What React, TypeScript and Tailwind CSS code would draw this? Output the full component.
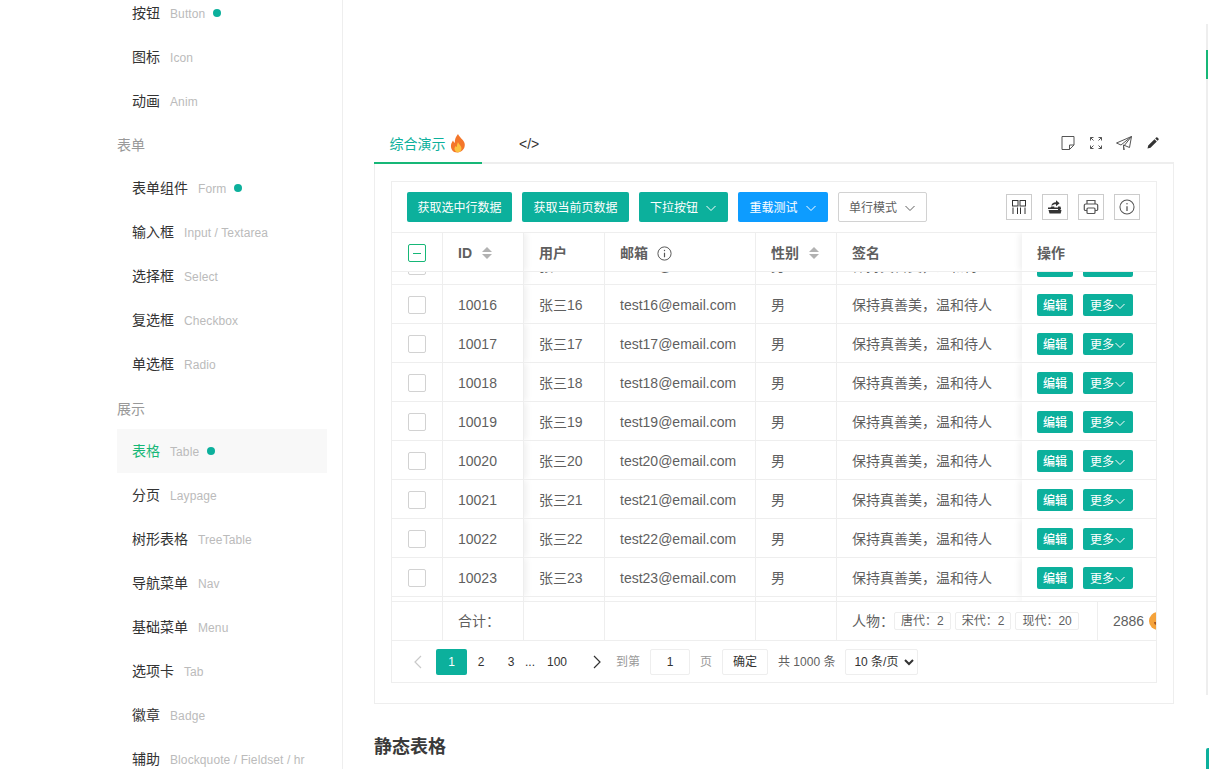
import React from "react";

const font = "font-['Liberation_Sans','Noto_Sans_CJK_SC',sans-serif]";

const Chevron = ({ className = "" }: { className?: string }) => (
  <svg viewBox="0 0 12 12" className={`w-3 h-3 ${className}`} fill="none" stroke="currentColor" strokeWidth="1">
    <path d="M1.5 4l4.5 4.5L10.5 4" />
  </svg>
);

const Sort = () => (
  <span className="ml-[10px] flex flex-col gap-[2px]">
    <span className="w-0 h-0 border-x-[5px] border-x-transparent border-b-[5px] border-b-[#b2b2b2]" />
    <span className="w-0 h-0 border-x-[5px] border-x-transparent border-t-[5px] border-t-[#b2b2b2]" />
  </span>
);

const InfoIcon = ({ size = 15 }: { size?: number }) => (
  <svg width={size} height={size} viewBox="0 0 20 20" fill="none" stroke="#555" strokeWidth="1.3">
    <circle cx="10" cy="10" r="8.8" />
    <circle cx="10" cy="6" r="0.9" fill="#555" stroke="none" />
    <path d="M10 9v6" strokeWidth="1.6" />
  </svg>
);

const Fire = () => (
  <svg width="18" height="19" viewBox="0 0 18 19" className="ml-[3px]">
    <path d="M9 0c1 3 5 5 6.5 9 1.2 4-1.500 9-6.500 9.500C4 19 1.500 15 2 11c.3-2 1.500-3.500 2-4.500.5 1 1 2 1.800 2.300C5.500 5.500 7 2.500 9 0z" fill="#f4762a" />
    <path d="M9 8c.5 2 3.500 3.500 3.500 6.500 0 2.300-1.700 3.800-3.500 3.800s-3.500-1.500-3.500-3.500c0-1.300.7-2 1.300-2.800.3.600.6 1 1 1.100C8 11 8.300 9.500 9 8z" fill="#fbc23f" />
  </svg>
);

const ToolIcon = ({ children }: { children: React.ReactNode }) => (
  <span className="w-[26px] h-[26px] border border-[#ccc] flex items-center justify-center">{children}</span>
);

type MenuItem = { cn: string; en: string; dot?: boolean; active?: boolean };

const MenuRow = ({ cn, en, dot, active }: MenuItem) => (
  <div className={`h-11 flex items-center pl-[15px] ${active ? "bg-[#f8f8f8]" : ""}`}>
    <span className={`text-sm ${active ? "text-[#16b777]" : "text-[#333]"}`}>{cn}</span>
    <span className="ml-[10px] pt-[2px] text-xs tracking-[0.1px] text-[#bbb]">{en}</span>
    {dot && <span className="ml-2 w-2 h-2 rounded-full bg-[#0cb09c]" />}
  </div>
);

const Sidebar = () => (
  <aside className="w-[343px] h-[778px] shrink-0 border-r border-[#eee] pl-[117px] pr-[15px] -mt-[9px]">
    <MenuRow cn="按钮" en="Button" dot />
    <MenuRow cn="图标" en="Icon" />
    <MenuRow cn="动画" en="Anim" />
    <div className="h-[43px] flex items-center text-sm text-[#999]">表单</div>
    <MenuRow cn="表单组件" en="Form" dot />
    <MenuRow cn="输入框" en="Input / Textarea" />
    <MenuRow cn="选择框" en="Select" />
    <MenuRow cn="复选框" en="Checkbox" />
    <MenuRow cn="单选框" en="Radio" />
    <div className="h-[43px] pt-[2px] flex items-center text-sm text-[#999]">展示</div>
    <MenuRow cn="表格" en="Table" dot active />
    <MenuRow cn="分页" en="Laypage" />
    <MenuRow cn="树形表格" en="TreeTable" />
    <MenuRow cn="导航菜单" en="Nav" />
    <MenuRow cn="基础菜单" en="Menu" />
    <MenuRow cn="选项卡" en="Tab" />
    <MenuRow cn="徽章" en="Badge" />
    <MenuRow cn="辅助" en="Blockquote / Fieldset / hr" />
  </aside>
);

const gridCols = "grid grid-cols-[51px_81px_81px_151px_81px_185px_134px]";
const fixedRight = "bg-white shadow-[-3px_0_6px_rgba(0,0,0,0.06)] [clip-path:inset(0_0_0_-10px)] relative";
const fixedLeft = "shadow-[3px_0_6px_rgba(0,0,0,0.06)] [clip-path:inset(0_-10px_0_0)]";

const Row = ({ n }: { n: number }) => (
  <div className={`${gridCols} h-[39px] border-b border-[#eee] text-sm text-[#5f5f5f]`}>
    <div className="border-r border-[#eee] flex items-center justify-center pt-[2px] pr-[1px]">
      <span className="w-[18px] h-[18px] border border-[#d2d2d2] rounded-[2px] bg-white" />
    </div>
    <div className={`border-r border-[#eee] flex items-center pt-[2px] pl-[15px] ${fixedLeft}`}>{10000 + n}</div>
    <div className="border-r border-[#eee] flex items-center pt-[2px] pl-[15px]">张三{n}</div>
    <div className="border-r border-[#eee] flex items-center pt-[2px] pl-[15px]">test{n}@email.com</div>
    <div className="border-r border-[#eee] flex items-center pt-[2px] pl-[15px]">男</div>
    <div className="flex items-center pt-[2px] pl-[15px]">保持真善美，温和待人</div>
    <div className={`${fixedRight} flex items-center pt-[2px] pl-[15px] gap-[10px]`}>
      <span className="w-9 h-[22px] pt-[2px] rounded-[2px] bg-[#0cb09c] text-white text-xs font-medium flex items-center justify-center">编辑</span>
      <span className="w-[50px] h-[22px] pt-[2px] rounded-[2px] bg-[#0cb09c] text-white text-xs flex items-center justify-center">
        更多<Chevron />
      </span>
    </div>
  </div>
);

const Filler = () => (
  <div className={`${gridCols} h-[4px]`}>
    <div className="border-r border-[#eee]" />
    <div className={`border-r border-[#eee] ${fixedLeft}`} />
    <div className="border-r border-[#eee]" />
    <div className="border-r border-[#eee]" />
    <div className="border-r border-[#eee]" />
    <div />
    <div className={fixedRight} />
  </div>
);

const Btn = ({ children, blue, w }: { children: React.ReactNode; blue?: boolean; w: string }) => (
  <span className={`h-[30px] ${w} rounded-[2px] text-white text-xs pt-px flex items-center justify-center gap-[7px] ${blue ? "bg-[#0d9cff]" : "bg-[#0cb09c]"}`}>
    {children}
  </span>
);

const Toolbar = () => (
  <div className="h-[51px] border-b border-[#eee] pl-[15px] pr-4 flex items-center">
    <div className="flex items-center gap-[10px]">
      <Btn w="w-[105px]">获取选中行数据</Btn>
      <Btn w="w-[107px]">获取当前页数据</Btn>
      <Btn w="w-[89px]">下拉按钮<Chevron /></Btn>
      <Btn w="w-[90px]" blue>重载测试<Chevron /></Btn>
      <span className="h-[30px] w-[89px] rounded-[2px] border border-[#d2d2d2] text-[#5f5f5f] text-xs pt-px flex items-center justify-center gap-[7px]">
        单行模式<Chevron />
      </span>
    </div>
    <div className="ml-auto flex gap-[10px] text-[#333]">
      <ToolIcon>
        <svg width="16" height="16" viewBox="0 0 16 16" fill="none" stroke="#333" strokeWidth="1">
          <rect x="1.500" y="1.500" width="5.500" height="5.500" />
          <rect x="9" y="1.500" width="5.500" height="5.500" />
          <path d="M2 8.500v6.500M6.500 8.500v6.500M9.500 8.500v6.500M14 8.500v6.500" />
        </svg>
      </ToolIcon>
      <ToolIcon>
        <svg width="16" height="16" viewBox="0 0 16 16" fill="#333">
          <path d="M1 8.500h2.500l.800-1h3v1H14v1.500H1z" />
          <path d="M1.500 11h13l-.800 3.500H2.500z" />
          <path d="M11 7.500h2.500V11H11z" />
          <path d="M4.500 7c0-2.600 1.800-3.800 4.500-3.800V1.200l3.600 3-3.600 3V5.200C7 5.200 5.700 5.800 4.500 7z" />
        </svg>
      </ToolIcon>
      <ToolIcon>
        <svg width="16" height="16" viewBox="0 0 16 16" fill="none" stroke="#555" strokeWidth="1.200">
          <path d="M4 5V1.500h8V5" />
          <path d="M4 11.500H2.500A1.200 1.200 0 0 1 1.300 10.300V6.500A1.500 1.500 0 0 1 2.800 5h10.400a1.500 1.500 0 0 1 1.500 1.500v3.800a1.200 1.200 0 0 1-1.200 1.200H12" />
          <rect x="4" y="9" width="8" height="5.500" rx="1" />
        </svg>
      </ToolIcon>
      <ToolIcon><InfoIcon size={16} /></ToolIcon>
    </div>
  </div>
);

const Header = () => (
  <div className={`${gridCols} h-[39px] border-b border-[#eee] text-sm font-semibold text-[#5f5f5f]`}>
    <div className="border-r border-[#eee] flex items-center justify-center pt-[2px] pr-[1px]">
      <span className="w-[18px] h-[18px] border border-[#16b777] rounded-[2px] flex items-center justify-center">
        <span className="w-2 h-px bg-[#16b777]" />
      </span>
    </div>
    <div className={`border-r border-[#eee] flex items-center pt-[2px] pl-[15px] ${fixedLeft}`}>ID<Sort /></div>
    <div className="border-r border-[#eee] flex items-center pt-[2px] pl-[15px]">用户</div>
    <div className="border-r border-[#eee] flex items-center pt-[2px] pl-[15px] gap-[9px]">邮箱<InfoIcon /></div>
    <div className="border-r border-[#eee] flex items-center pt-[2px] pl-[15px]">性别<Sort /></div>
    <div className="flex items-center pt-[2px] pl-[15px]">签名</div>
    <div className={`${fixedRight} flex items-center pt-[2px] pl-[15px]`}>操作</div>
  </div>
);

const Tag = ({ children }: { children: React.ReactNode }) => (
  <span className="h-[18px] px-[6px] border border-[#eee] rounded-[2px] text-xs text-[#5f5f5f] flex items-center">{children}</span>
);

const Totals = () => (
  <div className="grid grid-cols-[51px_81px_81px_151px_81px_261px_58px] h-10 border-y border-[#eee] text-sm text-[#5f5f5f] overflow-hidden">
    <div className="border-r border-[#eee]" />
    <div className="border-r border-[#eee] flex items-center pl-[15px]">合计：</div>
    <div className="border-r border-[#eee]" />
    <div className="border-r border-[#eee]" />
    <div className="border-r border-[#eee]" />
    <div className="border-r border-[#eee] flex items-center pl-[15px]">
      人物：
      <span className="flex gap-1">
        <Tag>唐代：2</Tag>
        <Tag>宋代：2</Tag>
        <Tag>现代：20</Tag>
      </span>
    </div>
    <div className="flex items-center pl-[15px] whitespace-nowrap">
      2886
      <span className="ml-[5px] w-[18px] h-[18px] rounded-full bg-[#f5a33b] shrink-0 flex items-center justify-center">
        <span className="w-2 h-[3px] rounded-b-full bg-[#a8521a] mt-1" />
      </span>
    </div>
  </div>
);

const Pager = () => (
  <div className="h-[41px] flex items-center pl-[22px] text-[#333] text-xs">
    <svg width="10" height="14" viewBox="0 0 10 14" fill="none" stroke="#c9c9c9" strokeWidth="1.200" className="ml-[-1px]">
      <path d="M8 1L2 7l6 6" />
    </svg>
    <span className="ml-[13px] w-[31px] h-[26px] rounded-[2px] bg-[#0cb09c] text-white flex items-center justify-center">1</span>
    <span className="w-[28px] text-center">2</span>
    <span className="w-[30px] pl-[2px] text-center">3</span>
    <span className="w-[10px] text-center">...</span>
    <span className="w-[38px] ml-[3px] text-center">100</span>
    <svg width="10" height="14" viewBox="0 0 10 14" fill="none" stroke="#333" strokeWidth="1.200" className="ml-[16px]">
      <path d="M2 1l6 6-6 6" />
    </svg>
    <span className="ml-[14px] text-[#999]">到第</span>
    <input readOnly value="1" className="ml-[10px] w-10 h-[26px] border border-[#eee] rounded-[2px] text-center text-[#333] outline-none" />
    <span className="ml-[10px] text-[#999]">页</span>
    <span className="ml-[10px] w-[46px] h-[26px] border border-[#eee] rounded-[2px] flex items-center justify-center text-[#333]">确定</span>
    <span className="ml-[10px] text-[#5f5f5f]">共 1000 条</span>
    <select defaultValue="10" className={`ml-[10px] w-[73px] h-[26px] border border-[#eee] rounded-[2px] bg-white text-[#333] text-xs pl-[4px] ${font}`}>
      <option value="10">10 条/页</option>
    </select>
  </div>
);

const Main = () => (
  <main className="flex-1 pl-[31px] pt-[125px]">
    <div className="w-[800px]">
      <div className="h-[39px] border-b-2 border-[#eee] flex relative">
        <div className="w-[108px] h-[39px] border-b-2 border-[#16b777] flex items-center justify-center text-sm text-[#0cb09c]">
          综合演示<Fire />
        </div>
        <div className="ml-[37px] text-sm text-[#333] flex items-center pt-[1px]">&lt;/&gt;</div>
        <div className="ml-auto mr-[15px] flex items-center gap-[14px] pb-[1px]">
          <svg width="14" height="14" viewBox="0 0 14 14" fill="none" stroke="#555" strokeWidth="1">
            <path d="M1 .500h12v8.500l-4.500 4.500H1zM13 9H8.500v4.500" />
          </svg>
          <svg width="14" height="14" viewBox="0 0 14 14" fill="none" stroke="#555" strokeWidth="1">
            <path d="M1.500 4.500v-3h3M1.500 1.500l3 3M12.500 4.500v-3h-3M12.500 1.500l-3 3M1.500 9.500v3h3M1.500 12.500l3-3M12.500 9.500v3h-3M12.500 12.500l-3-3" />
          </svg>
          <svg width="16" height="14" viewBox="0 0 16 14" fill="none" stroke="#555" strokeWidth="1" className="ml-[-1px]">
            <path d="M15.500.500L.500 7l4.500 2 10.500-8.500-8 10 .5 3.500-.5-5 6 2.500z" />
          </svg>
          <svg width="12" height="12" viewBox="0 0 12 12" fill="#333" className="ml-[1px]">
            <path d="M.500 11.500l.700-3 6.300-6.300 2.300 2.300-6.300 6.300zM8.200 1.500l.900-.900a.9.900 0 0 1 1.300 0l1 1a.9.900 0 0 1 0 1.300l-.9.900z" />
          </svg>
        </div>
      </div>
      <div className="border-x border-b border-[#eee] pl-4 pr-4 pt-[17px] pb-5">
        <div className="border border-[#eee] overflow-hidden">
          <Toolbar />
          <Header />
          <div className="h-[329px] overflow-hidden">
            <div className="-mt-[26px]">
              {[15, 16, 17, 18, 19, 20, 21, 22, 23].map((n) => (
                <Row key={n} n={n} />
              ))}
              <Filler />
            </div>
          </div>
          <Totals />
          <Pager />
        </div>
      </div>
      <h2 className="mt-[31px] text-lg font-semibold text-[#3a3a3a] leading-[24px]">静态表格</h2>
    </div>
  </main>
);

const Rail = () => (
  <div className="w-[3px] shrink-0 flex flex-col h-full pt-6">
    <div className="w-[2px] h-[26px] bg-[#eee]" />
    <div className="w-[2px] h-[29px] bg-[#16b777]" />
    <div className="w-[2px] h-[616px] bg-[#eee]" />
    <div className="mt-[53px] w-[3px] flex-1 rounded-tl-[2px] bg-[#0cb09c]" />
  </div>
);

export default function App() {
  return (
    <div className={`h-screen overflow-hidden flex bg-white ${font}`}>
      <Sidebar />
      <Main />
      <Rail />
    </div>
  );
}
